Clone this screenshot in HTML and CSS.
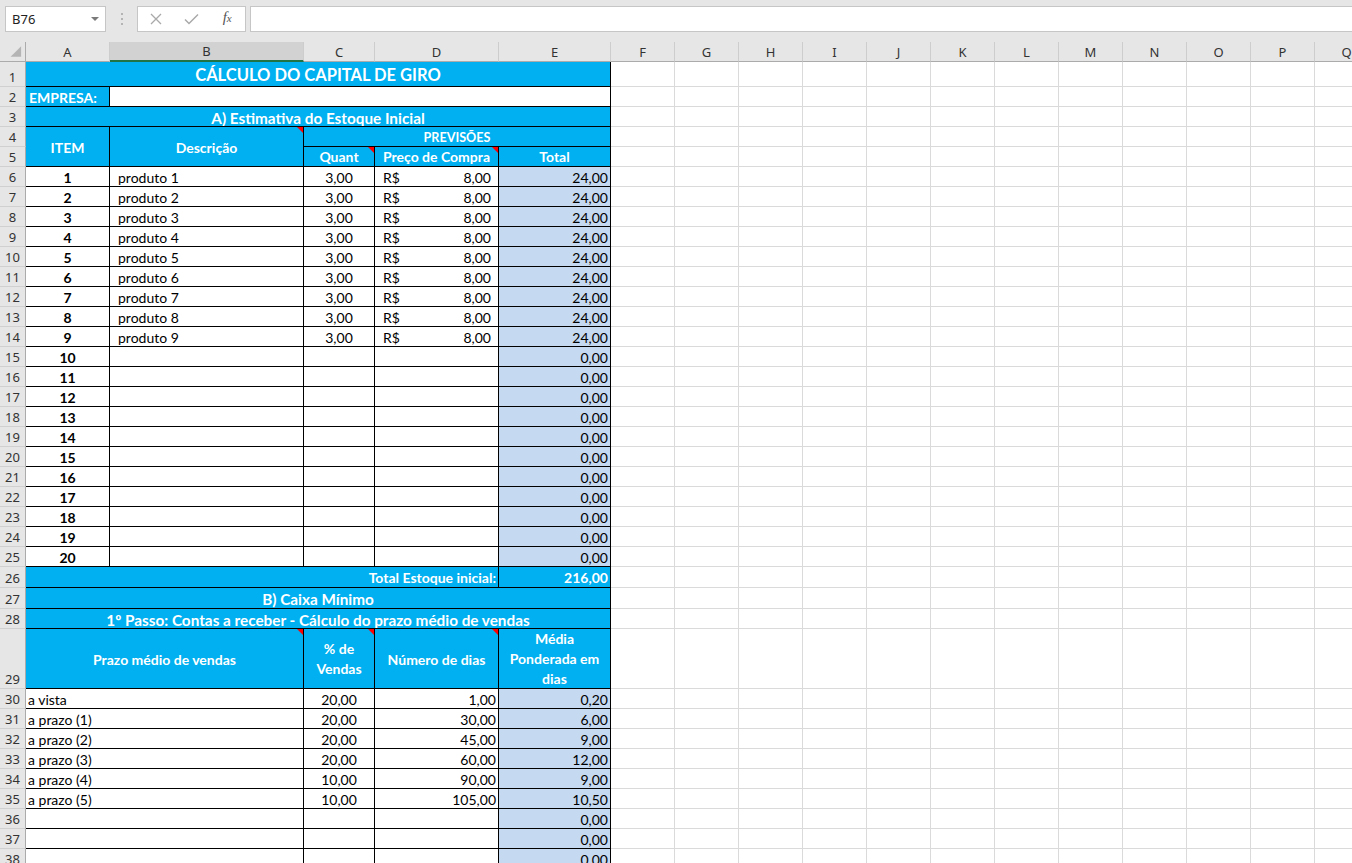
FILE: index.html
```html
<!DOCTYPE html>
<html lang="pt-BR">
<head>
<meta charset="utf-8">
<title>Cálculo do Capital de Giro</title>
<link rel="stylesheet" href="styles.css">
</head>
<body>
<div class="topbar">
  <div class="namebox"><span>B76</span><span class="arrow"></span></div>
  <div class="dots">
    <svg width="4" height="14" viewBox="0 0 4 14"><rect x="1" y="1" width="2" height="2" fill="#b4b4b4"/><rect x="1" y="6" width="2" height="2" fill="#b4b4b4"/><rect x="1" y="11" width="2" height="2" fill="#b4b4b4"/></svg>
  </div>
  <div class="fxbox">
    <span class="btn"><svg width="12" height="12" viewBox="0 0 12 12"><path d="M1 1L11 11M11 1L1 11" stroke="#a9a9a9" stroke-width="1.3" fill="none"/></svg></span>
    <span class="btn"><svg width="15" height="12" viewBox="0 0 15 12"><path d="M1 6.5L5 10.5L14 1.5" stroke="#a9a9a9" stroke-width="1.5" fill="none"/></svg></span>
    <span class="btn fx"><i>f</i><i class="sx">x</i></span>
  </div>
  <div class="formula"></div>
</div>

<div class="colhdr">
  <div class="corner"><svg width="26" height="19" viewBox="0 0 26 19"><path d="M22 4L22 15L11 15Z" fill="#b4b4b4"/></svg></div>
  <div class="ca">A</div>
  <div class="cb sel">B</div>
  <div class="cc">C</div>
  <div class="cd">D</div>
  <div class="ce">E</div>
  <div class="cx">F</div>
  <div class="cx">G</div>
  <div class="cx">H</div>
  <div class="cx">I</div>
  <div class="cx">J</div>
  <div class="cx">K</div>
  <div class="cx">L</div>
  <div class="cx">M</div>
  <div class="cx">N</div>
  <div class="cx">O</div>
  <div class="cx">P</div>
  <div class="cx">Q</div>
</div>

<div class="sheet">
  <!-- row 1 -->
  <div class="rh">1</div>
  <div class="c b ctr title s5">CÁLCULO DO CAPITAL DE GIRO</div>
  <div class="fill"></div>
  <!-- row 2 -->
  <div class="rh">2</div>
  <div class="c b">EMPRESA:</div>
  <div class="c s4"></div>
  <div class="fill"></div>
  <!-- row 3 -->
  <div class="rh">3</div>
  <div class="c b ctr big s5">A) Estimativa do Estoque Inicial</div>
  <div class="fill"></div>
  <!-- row 4 -->
  <div class="rh">4</div>
  <div class="c b ctr r2">ITEM</div>
  <div class="c b ctr r2 note">Descrição</div>
  <div class="c b ctr s3 small">PREVISÕES</div>
  <div class="fill"></div>
  <!-- row 5 -->
  <div class="rh">5</div>
  <div class="c b ctr bot note">Quant</div>
  <div class="c b ctr bot note">Preço de Compra</div>
  <div class="c b ctr bot">Total</div>
  <div class="fill"></div>

  <div class="rh">6</div><div class="c ctr bold">1</div><div class="c pl">produto 1</div><div class="c ctr">3,00</div><div class="c acc"><span>R$</span><span>8,00</span></div><div class="c sh r">24,00</div><div class="fill"></div>
  <div class="rh">7</div><div class="c ctr bold">2</div><div class="c pl">produto 2</div><div class="c ctr">3,00</div><div class="c acc"><span>R$</span><span>8,00</span></div><div class="c sh r">24,00</div><div class="fill"></div>
  <div class="rh">8</div><div class="c ctr bold">3</div><div class="c pl">produto 3</div><div class="c ctr">3,00</div><div class="c acc"><span>R$</span><span>8,00</span></div><div class="c sh r">24,00</div><div class="fill"></div>
  <div class="rh">9</div><div class="c ctr bold">4</div><div class="c pl">produto 4</div><div class="c ctr">3,00</div><div class="c acc"><span>R$</span><span>8,00</span></div><div class="c sh r">24,00</div><div class="fill"></div>
  <div class="rh">10</div><div class="c ctr bold">5</div><div class="c pl">produto 5</div><div class="c ctr">3,00</div><div class="c acc"><span>R$</span><span>8,00</span></div><div class="c sh r">24,00</div><div class="fill"></div>
  <div class="rh">11</div><div class="c ctr bold">6</div><div class="c pl">produto 6</div><div class="c ctr">3,00</div><div class="c acc"><span>R$</span><span>8,00</span></div><div class="c sh r">24,00</div><div class="fill"></div>
  <div class="rh">12</div><div class="c ctr bold">7</div><div class="c pl">produto 7</div><div class="c ctr">3,00</div><div class="c acc"><span>R$</span><span>8,00</span></div><div class="c sh r">24,00</div><div class="fill"></div>
  <div class="rh">13</div><div class="c ctr bold">8</div><div class="c pl">produto 8</div><div class="c ctr">3,00</div><div class="c acc"><span>R$</span><span>8,00</span></div><div class="c sh r">24,00</div><div class="fill"></div>
  <div class="rh">14</div><div class="c ctr bold">9</div><div class="c pl">produto 9</div><div class="c ctr">3,00</div><div class="c acc"><span>R$</span><span>8,00</span></div><div class="c sh r">24,00</div><div class="fill"></div>
  <div class="rh">15</div><div class="c ctr bold">10</div><div class="c"></div><div class="c"></div><div class="c"></div><div class="c sh r">0,00</div><div class="fill"></div>
  <div class="rh">16</div><div class="c ctr bold">11</div><div class="c"></div><div class="c"></div><div class="c"></div><div class="c sh r">0,00</div><div class="fill"></div>
  <div class="rh">17</div><div class="c ctr bold">12</div><div class="c"></div><div class="c"></div><div class="c"></div><div class="c sh r">0,00</div><div class="fill"></div>
  <div class="rh">18</div><div class="c ctr bold">13</div><div class="c"></div><div class="c"></div><div class="c"></div><div class="c sh r">0,00</div><div class="fill"></div>
  <div class="rh">19</div><div class="c ctr bold">14</div><div class="c"></div><div class="c"></div><div class="c"></div><div class="c sh r">0,00</div><div class="fill"></div>
  <div class="rh">20</div><div class="c ctr bold">15</div><div class="c"></div><div class="c"></div><div class="c"></div><div class="c sh r">0,00</div><div class="fill"></div>
  <div class="rh">21</div><div class="c ctr bold">16</div><div class="c"></div><div class="c"></div><div class="c"></div><div class="c sh r">0,00</div><div class="fill"></div>
  <div class="rh">22</div><div class="c ctr bold">17</div><div class="c"></div><div class="c"></div><div class="c"></div><div class="c sh r">0,00</div><div class="fill"></div>
  <div class="rh">23</div><div class="c ctr bold">18</div><div class="c"></div><div class="c"></div><div class="c"></div><div class="c sh r">0,00</div><div class="fill"></div>
  <div class="rh">24</div><div class="c ctr bold">19</div><div class="c"></div><div class="c"></div><div class="c"></div><div class="c sh r">0,00</div><div class="fill"></div>
  <div class="rh">25</div><div class="c ctr bold">20</div><div class="c"></div><div class="c"></div><div class="c"></div><div class="c sh r">0,00</div><div class="fill"></div>

  <!-- row 26 -->
  <div class="rh">26</div>
  <div class="c b r s4">Total Estoque inicial:</div>
  <div class="c b r">216,00</div>
  <div class="fill"></div>
  <!-- row 27 -->
  <div class="rh">27</div>
  <div class="c b ctr big s5">B) Caixa Mínimo</div>
  <div class="fill"></div>
  <!-- row 28 -->
  <div class="rh">28</div>
  <div class="c b ctr big s5">1º Passo: Contas a receber - Cálculo do prazo médio de vendas</div>
  <div class="fill"></div>
  <!-- row 29 -->
  <div class="rh">29</div>
  <div class="c b ctr s2 note">Prazo médio de vendas</div>
  <div class="c b ctr wrap note">% de<br>Vendas</div>
  <div class="c b ctr note">Número de dias</div>
  <div class="c b ctr wrap">Média<br>Ponderada em<br>dias</div>
  <div class="fill"></div>

  <div class="rh">30</div><div class="c s2 pa">a vista</div><div class="c ctr">20,00</div><div class="c r">1,00</div><div class="c sh r">0,20</div><div class="fill"></div>
  <div class="rh">31</div><div class="c s2 pa">a prazo (1)</div><div class="c ctr">20,00</div><div class="c r">30,00</div><div class="c sh r">6,00</div><div class="fill"></div>
  <div class="rh">32</div><div class="c s2 pa">a prazo (2)</div><div class="c ctr">20,00</div><div class="c r">45,00</div><div class="c sh r">9,00</div><div class="fill"></div>
  <div class="rh">33</div><div class="c s2 pa">a prazo (3)</div><div class="c ctr">20,00</div><div class="c r">60,00</div><div class="c sh r">12,00</div><div class="fill"></div>
  <div class="rh">34</div><div class="c s2 pa">a prazo (4)</div><div class="c ctr">10,00</div><div class="c r">90,00</div><div class="c sh r">9,00</div><div class="fill"></div>
  <div class="rh">35</div><div class="c s2 pa">a prazo (5)</div><div class="c ctr">10,00</div><div class="c r">105,00</div><div class="c sh r">10,50</div><div class="fill"></div>
  <div class="rh">36</div><div class="c s2 pa"></div><div class="c"></div><div class="c"></div><div class="c sh r">0,00</div><div class="fill"></div>
  <div class="rh">37</div><div class="c s2 pa"></div><div class="c"></div><div class="c"></div><div class="c sh r">0,00</div><div class="fill"></div>
  <div class="rh">38</div><div class="c s2 pa"></div><div class="c"></div><div class="c"></div><div class="c sh r">0,00</div><div class="fill"></div>
</div>
</body>
</html>
```

FILE: styles.css
```css
* { box-sizing: border-box; }
html, body { margin: 0; padding: 0; }
body {
  width: 1352px;
  height: 863px;
  overflow: hidden;
  background: #ffffff;
  font-family: "Lato", "Noto Sans", sans-serif;
}

/* ---------- formula bar ---------- */
.topbar {
  height: 42px;
  background: #e6e6e6;
  display: flex;
  align-items: flex-start;
  padding-top: 6px;
  font-family: "Noto Sans", "Open Sans", sans-serif;
}
.namebox {
  margin-left: 5px;
  width: 101px;
  height: 26px;
  background: #fff;
  border: 1px solid #c6c6c6;
  display: flex;
  align-items: center;
  justify-content: space-between;
  padding: 0 6px 0 6px;
  font-size: 13px;
  color: #222;
}
.namebox .arrow {
  width: 0;
  height: 0;
  border-left: 4px solid transparent;
  border-right: 4px solid transparent;
  border-top: 4px solid #7a7a7a;
}
.dots {
  width: 31px;
  height: 26px;
  display: flex;
  align-items: center;
  justify-content: center;
}
.fxbox {
  width: 109px;
  height: 26px;
  background: #fff;
  border: 1px solid #c6c6c6;
  display: flex;
  align-items: center;
}
.btn {
  width: 36px;
  height: 24px;
  display: flex;
  align-items: center;
  justify-content: center;
}
.fx {
  font-family: "Liberation Serif", serif;
  font-size: 15px;
  color: #555;
  align-items: baseline;
  padding-top: 2px;
}
.fx .sx { font-size: 11px; }
.formula {
  margin-left: 4px;
  flex: 1;
  height: 26px;
  background: #fff;
  border: 1px solid #c6c6c6;
  border-right: none;
}

/* ---------- column headers ---------- */
.colhdr {
  display: flex;
  height: 20px;
  background: #e6e6e6;
  font-family: "Noto Sans", "Open Sans", sans-serif;
  font-size: 13px;
  color: #333;
}
.colhdr > div {
  flex: none;
  border-right: 1px solid #cdcdcd;
  border-bottom: 1px solid #ababab;
  display: flex;
  align-items: center;
  justify-content: center;
}
.colhdr .corner { width: 26px; border-right-color: #ababab; }
.colhdr .ca { width: 84px; }
.colhdr .cb { width: 194px; }
.colhdr .cc { width: 71px; }
.colhdr .cd { width: 124px; }
.colhdr .ce { width: 112px; }
.colhdr .cx { width: 64px; }
.colhdr .sel {
  background: #d2d2d2;
  border-bottom: 2px solid #217346;
}

/* ---------- sheet grid ---------- */
.sheet {
  display: grid;
  grid-template-columns: 26px 84px 194px 71px 124px 112px 1fr;
  grid-template-rows: 25px repeat(24, 20px) 21px 21px 20px 60px repeat(9, 20px);
}
.rh {
  background: #e6e6e6;
  border-right: 1px solid #ababab;
  border-bottom: 1px solid #d0d0d0;
  font-family: "Noto Sans", "Open Sans", sans-serif;
  font-size: 13px;
  color: #333;
  display: flex;
  align-items: flex-end;
  justify-content: center;
  line-height: 18px;
}
.c {
  border-right: 1px solid #000;
  border-bottom: 1px solid #000;
  display: flex;
  align-items: center;
  padding: 2px 3px 0 3px;
  font-size: 14px;
  color: #000;
  white-space: nowrap;
  overflow: hidden;
  line-height: 18px;
}
.b { background: #00b0f0; color: #fff; font-weight: 700; }
.sh { background: #c5d9f1; }
.ctr { justify-content: center; text-align: center; }
.r { justify-content: flex-end; padding-right: 2px; }
.bold { font-weight: 700; }
.title { font-size: 16.5px; padding-top: 1px; }
.big { font-size: 15.3px; }
.small { font-size: 12.6px; padding-top: 3px; }
.bot { align-items: flex-end; padding-bottom: 0; }
.pl { padding-left: 8px; }
.pa { padding-left: 2px; }
.acc { justify-content: space-between; padding: 2px 7px 0 8px; }
.wrap { white-space: normal; line-height: 20px; padding-top: 0; }
.s2 { grid-column: span 2; }
.s3 { grid-column: span 3; }
.s4 { grid-column: span 4; }
.s5 { grid-column: span 5; }
.r2 { grid-row: span 2; }
.note { position: relative; }
.note::after {
  content: "";
  position: absolute;
  top: 0;
  right: 0;
  width: 0;
  height: 0;
  border-left: 6px solid transparent;
  border-top: 6px solid #ff0000;
}
.fill {
  border-bottom: 1px solid #dadada;
  background: repeating-linear-gradient(90deg, transparent 0 63px, #dadada 63px 64px);
}
```
